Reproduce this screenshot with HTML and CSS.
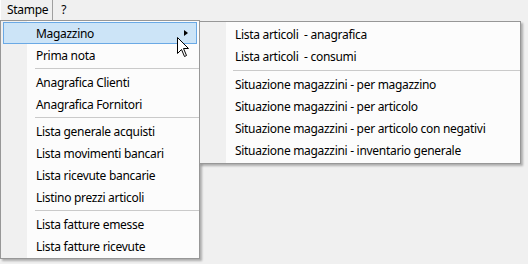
FILE: index.html
```html
<!DOCTYPE html>
<html>
<head>
<meta charset="utf-8">
<link rel="stylesheet" href="styles.css">
</head>
<body>
	<div class="bar">
		<a class="bar-item on">Stampe</a>
		<a class="bar-item">?</a>
	</div>
	<div class="drop">
		<ul class="menu main">
			<li class="item hover">Magazzino<span class="arr"></span></li>
			<li class="item">Prima nota</li>
			<li class="sep"></li>
			<li class="item">Anagrafica Clienti</li>
			<li class="item">Anagrafica Fornitori</li>
			<li class="sep"></li>
			<li class="item">Lista generale acquisti</li>
			<li class="item">Lista movimenti bancari</li>
			<li class="item">Lista ricevute bancarie</li>
			<li class="item">Listino prezzi articoli</li>
			<li class="sep"></li>
			<li class="item">Lista fatture emesse</li>
			<li class="item">Lista fatture ricevute</li>
		</ul>
		<ul class="menu sub">
			<li class="item">Lista articoli &nbsp;- anagrafica</li>
			<li class="item">Lista articoli &nbsp;- consumi</li>
			<li class="sep"></li>
			<li class="item">Situazione magazzini - per magazzino</li>
			<li class="item">Situazione magazzini - per articolo</li>
			<li class="item">Situazione magazzini - per articolo con negativi</li>
			<li class="item">Situazione magazzini - inventario generale</li>
		</ul>
	</div>
	<svg class="cursor" width="13" height="21" viewBox="0 0 13 21">
		<path d="M0.5 0.5 L0.5 16.5 L4.5 12.5 L7.5 19.5 L9.5 18.5 L6.5 11.5 L11.5 11.5 Z" fill="#fff" stroke="#000" stroke-width="1"/>
	</svg>
</body>
</html>
```
FILE: styles.css
```css
html,body{margin:0;height:100%}
body{background:#f0f0f0;font:12px "Noto Sans",sans-serif;letter-spacing:-0.3px;color:#000;position:relative;overflow:hidden}
ul,li{margin:0;padding:0;list-style:none}

.bar{display:flex;height:20px;line-height:19px}
.bar-item{padding:0 6px 0 7px;cursor:default}
.bar-item.on{border-left:1px solid #fdfdfd;border-right:1px solid #a0a0a0;padding:0 4px 0 6px;margin-right:1px}

.drop{display:flex;align-items:flex-start}
.menu{
	border:1px solid #979797;
	padding:1px 2px;
	box-shadow:2px 2px 2px rgba(0,0,0,.28);
	background:linear-gradient(to right,#f0f0f0 0,#f0f0f0 26px,#fcfcfc 26px);
}
.main{width:194px}
.sub{width:316px;margin-top:1px;margin-left:-1px;padding-bottom:2px}
.item{
	position:relative;
	height:22px;line-height:22px;
	padding-left:32px;
	border:1px solid transparent;
	white-space:nowrap;
	box-sizing:border-box;
}
.sub .item{line-height:21px}
.item.hover{background:#cce4f7;border-color:#6aa9e5}
.sep{height:1px;background:#cacaca;margin:2px -2px 2px 32px}
.sub .sep{margin:3px -2px 2px 31px}
.arr{
	position:absolute;right:8px;top:7px;
	border-left:4px solid #000;
	border-top:3.5px solid transparent;
	border-bottom:3.5px solid transparent;
}
.cursor{position:absolute;left:177px;top:37px}
```
